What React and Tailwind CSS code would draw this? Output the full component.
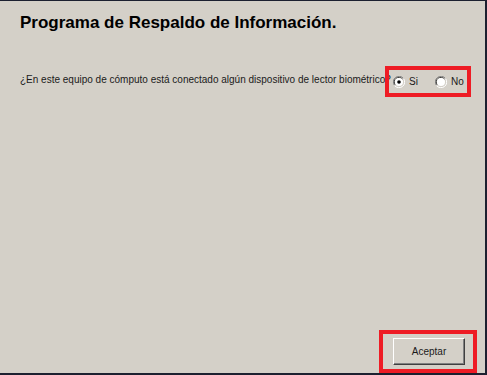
import React, { useState } from "react";

// Classic Win9x style radio button
const Radio = ({ checked }) => (
  <svg width="12" height="12" viewBox="0 0 12 12" className="shrink-0">
    <path d="M10.5 2.5 A5.5 5.5 0 0 0 1.5 9.5" fill="none" stroke="#808080" strokeWidth="1" />
    <path d="M9.5 3.2 A4.5 4.5 0 0 0 2.2 8.8" fill="none" stroke="#404040" strokeWidth="1" />
    <path d="M1.5 9.5 A5.5 5.5 0 0 0 10.5 2.5" fill="none" stroke="#ffffff" strokeWidth="1" />
    <circle cx="6" cy="6" r="4" fill="#ffffff" />
    {checked && <circle cx="6" cy="6" r="1.8" fill="#000000" />}
  </svg>
);

const App = () => {
  const [value, setValue] = useState("si");

  return (
    <div
      className="w-[487px] h-[375px] bg-[#d4d0c8] border-t border-r-2 border-b-2 border-[#1c2030] flex flex-col text-black"
      style={{ fontFamily: '"Liberation Sans", Arial, sans-serif' }}
    >
      {/* Title */}
      <h1 className="pl-[20px] pt-[12px] text-[17px] font-bold leading-[20px]">
        Programa de Respaldo de Información.
      </h1>

      {/* Question */}
      <div className="flex items-center pl-[20px] mt-[33px]">
        <p className="w-[365px] shrink-0 whitespace-nowrap text-[10px] text-[#1a1a1a] leading-[14px] -mt-[3px]">
          ¿En este equipo de cómputo está conectado algún dispositivo de lector biométrico?
        </p>
        <div className="shrink-0 border-4 border-[#ee1c25] w-[86px] h-[31px] flex items-center pl-[4px] text-[10px] text-[#1a1a1a]">
          <label className="flex items-center gap-[4px]" onClick={() => setValue("si")}>
            <Radio checked={value === "si"} />
            <span>Si</span>
          </label>
          <label className="flex items-center gap-[4px] ml-[17px]" onClick={() => setValue("no")}>
            <Radio checked={value === "no"} />
            <span>No</span>
          </label>
        </div>
      </div>

      <div className="flex-1" />

      {/* Footer */}
      <div className="flex justify-end pr-[8px]">
        <div className="border-4 border-[#ee1c25] w-[98px] h-[43px] flex items-center pl-[10px]">
          <button className="w-[72px] h-[27px] bg-[#d4d0c8] text-[10px] text-[#1a1a1a] border border-t-white border-l-white border-r-[#404040] border-b-[#404040] shadow-[inset_-1px_-1px_0_#808080]">
            Aceptar
          </button>
        </div>
      </div>
    </div>
  );
};

export default App;
